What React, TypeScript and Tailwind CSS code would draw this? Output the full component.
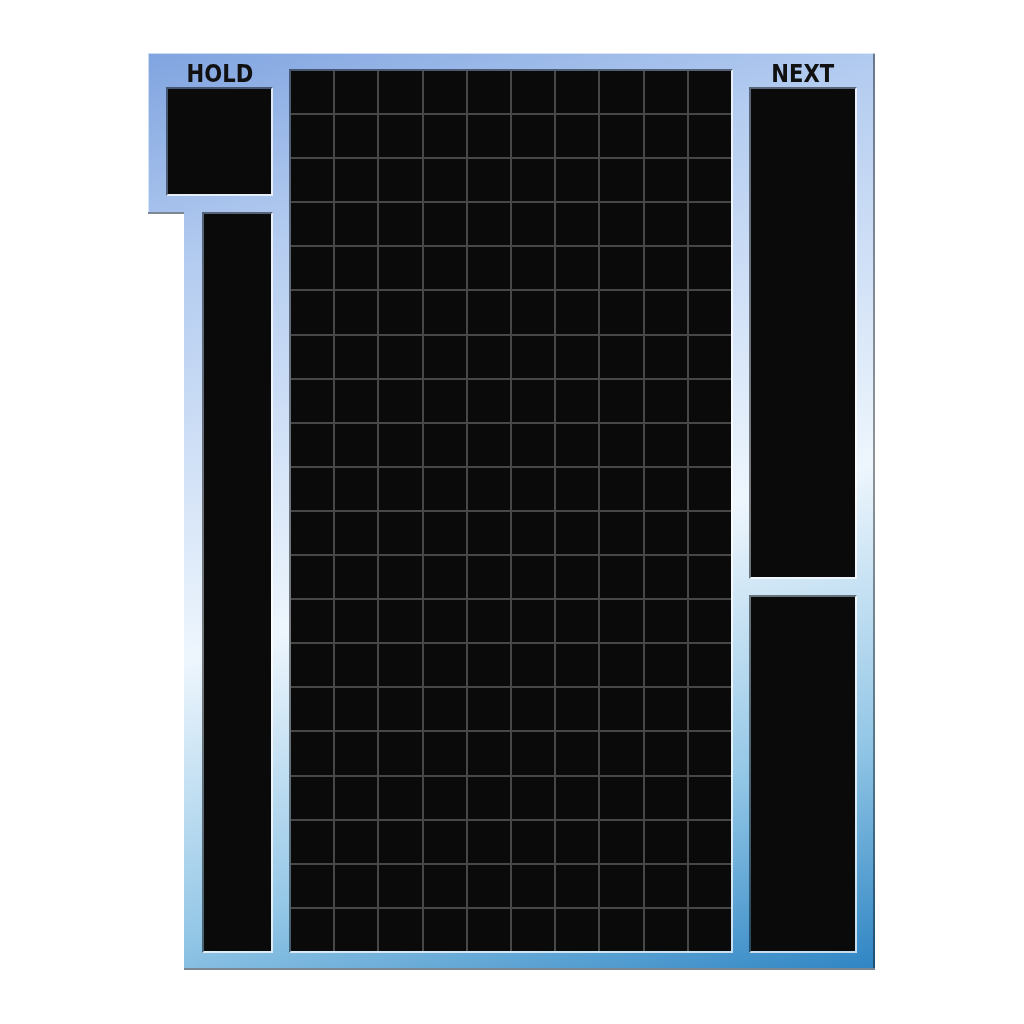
const cells = Array.from({ length: 200 }, (_, i) => i);

const well =
  "border-2 border-t-black/50 border-l-black/50 border-b-white/70 border-r-white/70 bg-[#0a0a0a] bg-clip-padding";

function Label({ text }: { text: string }) {
  return (
    <div className="flex h-[34px] items-end justify-center pb-[1px]">
      <span className="inline-block scale-x-[0.88] text-[24px] leading-[24px] font-bold text-[#111] [font-family:'DejaVu_Sans',sans-serif]">
        {text}
      </span>
    </div>
  );
}

export default function App() {
  return (
    <div className="min-h-screen bg-white pt-[53px] pl-[148px]">
      <div className="w-[727px] [filter:drop-shadow(0_2px_0_rgba(35,55,75,0.6))]">
        <div className="flex h-[915px] items-start bg-[linear-gradient(164deg,#80a4e0_0%,#b4ccf0_20%,#eef6fd_55%,#92c6e6_80%,#2f85c3_100%)] pl-[18px] pr-[18px] shadow-[inset_1px_1px_0_rgba(255,255,255,0.6),inset_-2px_0_0_rgba(0,0,0,0.4)] [clip-path:polygon(0_0,100%_0,100%_100%,36px_100%,36px_159px,0_159px)]">
          {/* hold column */}
          <div className="flex w-[107px] flex-col">
            <Label text="HOLD" />
            <div className={`h-[109px] w-[107px] ${well}`} />
            <div className={`mt-4 ml-auto h-[741px] w-[71px] ${well}`} />
          </div>

          {/* playfield */}
          <div className="mt-4 ml-4 grid h-[884px] w-[444px] grid-cols-10 grid-rows-[repeat(20,1fr)] gap-[2px] border-2 border-t-black/50 border-l-black/50 border-b-white/70 border-r-white/70 bg-[#474747] bg-clip-padding">
            {cells.map((i) => (
              <div key={i} className="bg-[#0a0a0a]" />
            ))}
          </div>

          {/* next column */}
          <div className="ml-4 flex w-[108px] flex-col">
            <Label text="NEXT" />
            <div className={`h-[492px] w-[108px] ${well}`} />
            <div className={`mt-4 h-[358px] w-[108px] ${well}`} />
          </div>
        </div>
      </div>
    </div>
  );
}
